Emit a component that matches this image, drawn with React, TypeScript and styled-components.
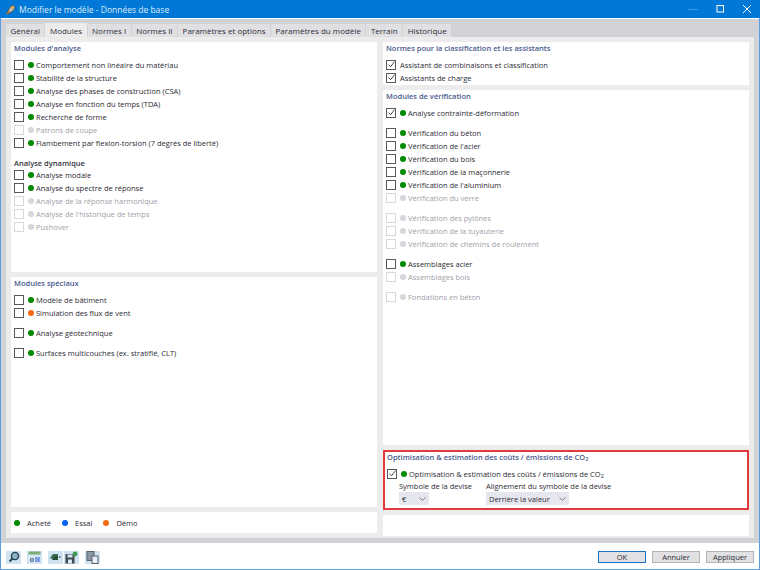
import styled, { createGlobalStyle } from "styled-components";

const GlobalStyle = createGlobalStyle`
    html, body {
        margin: 0;
        padding: 0;
        width: 760px;
        height: 570px;
        overflow: hidden;
        background: #fff;
        font-family: "Open Sans", "Noto Sans", sans-serif;
        font-size: 8px;
        color: #2b2b33;
    }
`;

type Item = { label: React.ReactNode; dot?: "green" | "orange" | "blue" | "off"; checked?: boolean; gap?: number };

const dotColors = { green: "#008a00", orange: "#f26a12", blue: "#0a62f0", off: "#d6d6dc" };

const CO2 = () => <>CO<Sub>2</Sub></>;

const analysis: Item[] = [
    { label: "Comportement non linéaire du matériau", dot: "green" },
    { label: "Stabilité de la structure", dot: "green" },
    { label: "Analyse des phases de construction (CSA)", dot: "green" },
    { label: "Analyse en fonction du temps (TDA)", dot: "green" },
    { label: "Recherche de forme", dot: "green" },
    { label: "Patrons de coupe", dot: "off" },
    { label: "Flambement par flexion-torsion (7 degrés de liberté)", dot: "green" },
];

const dynamic: Item[] = [
    { label: "Analyse modale", dot: "green" },
    { label: "Analyse du spectre de réponse", dot: "green" },
    { label: "Analyse de la réponse harmonique", dot: "off" },
    { label: "Analyse de l'historique de temps", dot: "off" },
    { label: "Pushover", dot: "off" },
];

const special: Item[] = [
    { label: "Modèle de bâtiment", dot: "green" },
    { label: "Simulation des flux de vent", dot: "orange" },
    { label: "Analyse géotechnique", dot: "green", gap: 7 },
    { label: "Surfaces multicouches (ex. stratifié, CLT)", dot: "green", gap: 7 },
];

const assistants: Item[] = [
    { label: "Assistant de combinaisons et classification", checked: true },
    { label: "Assistants de charge", checked: true },
];

const checks: Item[] = [
    { label: "Analyse contrainte-déformation", dot: "green", checked: true },
    { label: "Vérification du béton", dot: "green", gap: 7 },
    { label: "Vérification de l'acier", dot: "green" },
    { label: "Vérification du bois", dot: "green" },
    { label: "Vérification de la maçonnerie", dot: "green" },
    { label: "Vérification de l'aluminium", dot: "green" },
    { label: "Vérification du verre", dot: "off" },
    { label: "Vérification des pylônes", dot: "off", gap: 7 },
    { label: "Vérification de la tuyauterie", dot: "off" },
    { label: "Vérification de chemins de roulement", dot: "off" },
    { label: "Assemblages acier", dot: "green", gap: 7 },
    { label: "Assemblages bois", dot: "off" },
    { label: "Fondations en béton", dot: "off", gap: 7 },
];

const tabs = ["Général", "Modules", "Normes I", "Normes II", "Paramètres et options", "Paramètres du modèle", "Terrain", "Historique"];

const CheckList = ({ items }: { items: Item[] }) => (
    <List>
        {items.map((item, i) => (
            <Row key={i} $gap={item.gap ?? 0} $off={item.dot === "off"}>
                <Box $off={item.dot === "off"}>
                    {item.checked && (
                        <svg width="9" height="9" viewBox="0 0 9 9">
                            <path d="M1.5 4.5 L3.5 6.8 L7.6 1.6" fill="none" stroke="#333" strokeWidth="0.9" />
                        </svg>
                    )}
                </Box>
                {item.dot && <Dot $color={dotColors[item.dot]} />}
                <span>{item.label}</span>
            </Row>
        ))}
    </List>
);

const Chevron = () => (
    <svg width="7" height="4" viewBox="0 0 7 4">
        <path d="M0.5 0.5 L3.5 3.3 L6.5 0.5" fill="none" stroke="#555" strokeWidth="0.7" />
    </svg>
);

const App = () => {
    return (
        <Window>
            <GlobalStyle />
            <TitleBar>
                <svg width="10" height="11" viewBox="0 0 10 11">
                    <path d="M1 9 L4 3 L7 1 L9 3 L8 6 L4 9 Z" fill="#b9bcc0" stroke="#4a4030" strokeWidth="0.7" />
                    <circle cx="6.4" cy="3.6" r="1.2" fill="#d9a520" />
                    <path d="M1 10 L4 7" stroke="#c8781e" strokeWidth="1.2" />
                </svg>
                <Title>Modifier le modèle - Données de base</Title>
                <WindowButtons>
                    <svg width="10" height="10" viewBox="0 0 10 10">
                        <path d="M0 5.5 H10" stroke="#3f97e4" strokeWidth="1" />
                    </svg>
                    <svg width="10" height="10" viewBox="0 0 10 10">
                        <rect x="2" y="1.5" width="6.5" height="6.5" fill="none" stroke="#fff" strokeWidth="1" />
                    </svg>
                    <svg width="10" height="10" viewBox="0 0 10 10">
                        <path d="M1 1 L9 9 M9 1 L1 9" stroke="#fff" strokeWidth="1" />
                    </svg>
                </WindowButtons>
            </TitleBar>
            <Client>
                <TabStrip>
                    {tabs.map((tab) => (
                        <Tab key={tab} $active={tab === "Modules"}>{tab}</Tab>
                    ))}
                </TabStrip>
                <TabBody>
                    <Column>
                        <Panel $height={230}>
                            <PanelTitle>Modules d'analyse</PanelTitle>
                            <CheckList items={analysis} />
                            <SubTitle>Analyse dynamique</SubTitle>
                            <CheckList items={dynamic} />
                        </Panel>
                        <Panel $height={230}>
                            <PanelTitle>Modules spéciaux</PanelTitle>
                            <CheckList items={special} />
                        </Panel>
                        <Legend>
                            <LegendItem><Dot $color={dotColors.green} />Acheté</LegendItem>
                            <LegendItem><Dot $color={dotColors.blue} />Essai</LegendItem>
                            <LegendItem><Dot $color={dotColors.orange} />Démo</LegendItem>
                        </Legend>
                    </Column>
                    <Column>
                        <Panel $height={43}>
                            <PanelTitle>Normes pour la classification et les assistants</PanelTitle>
                            <CheckList items={assistants} />
                        </Panel>
                        <Panel $height={355}>
                            <PanelTitle>Modules de vérification</PanelTitle>
                            <CheckList items={checks} />
                        </Panel>
                        <Highlight>
                            <PanelTitle>Optimisation & estimation des coûts / émissions de <CO2 /></PanelTitle>
                            <CheckList items={[{ label: <>Optimisation & estimation des coûts / émissions de <CO2 /></>, dot: "green", checked: true }]} />
                            <Fields>
                                <Field>
                                    Symbole de la devise
                                    <Select $width={30}>€<Chevron /></Select>
                                </Field>
                                <Field>
                                    Alignement du symbole de la devise
                                    <Select $width={83}>Derrière la valeur<Chevron /></Select>
                                </Field>
                            </Fields>
                        </Highlight>
                        <Legend />
                    </Column>
                </TabBody>
                <Footer>
                    <Tools>
                        <Tool>
                            <svg width="12" height="12" viewBox="0 0 12 12">
                                <circle cx="7" cy="5" r="3.6" fill="#8fb4c8" stroke="#24404f" strokeWidth="1.4" />
                                <path d="M4.5 7.5 L1.5 10.5" stroke="#24404f" strokeWidth="1.8" />
                            </svg>
                        </Tool>
                        <Tool>
                            <svg width="13" height="13" viewBox="0 0 13 13">
                                <rect x="0.5" y="0.5" width="12" height="3" fill="#7fae7a" />
                                <rect x="0.5" y="4" width="12" height="8.5" fill="#d8e6f4" />
                                <circle cx="4" cy="9" r="1.6" fill="none" stroke="#3a5a80" />
                                <rect x="7" y="6" width="5" height="5" fill="#7f9fe0" />
                            </svg>
                        </Tool>
                        <ToolGroup>
                            <Tool>
                                <svg width="13" height="10" viewBox="0 0 13 10">
                                    <path d="M1 6 L4 2 H9 V7 H3 Z" fill="#3f6f52" />
                                    <path d="M3 8 L6 4 H9 V8 Z" fill="#24503a" />
                                    <path d="M10 4 L12.5 5 L10 6 Z" fill="#55606a" />
                                </svg>
                            </Tool>
                            <Tool>
                                <svg width="13" height="13" viewBox="0 0 13 13">
                                    <path d="M0.5 3 H9.5 V12.5 H0.5 Z" fill="#3e4a52" />
                                    <rect x="2.5" y="3.5" width="5" height="3" fill="#d8e6f4" />
                                    <rect x="3" y="8.5" width="4" height="4" fill="#d8e6f4" />
                                    <circle cx="10" cy="3" r="2.4" fill="#3c9a4c" />
                                </svg>
                            </Tool>
                        </ToolGroup>
                        <Tool>
                            <svg width="13" height="13" viewBox="0 0 13 13">
                                <rect x="1" y="0.5" width="7" height="9" fill="#8a97a3" stroke="#56626c" />
                                <rect x="6" y="5" width="6" height="7.5" fill="#e8eef4" stroke="#56626c" />
                            </svg>
                        </Tool>
                    </Tools>
                    <Buttons>
                        <Button $primary>OK</Button>
                        <Button>Annuler</Button>
                        <Button>Appliquer</Button>
                    </Buttons>
                </Footer>
            </Client>
        </Window>
    );
};

const Window = styled.div`
    width: 760px;
    height: 570px;
    box-sizing: border-box;
    display: flex;
    flex-direction: column;
    border: 1px solid #5a9fe0;
    border-top: none;
    background: #fff;
`;

const TitleBar = styled.div`
    height: 18px;
    flex: none;
    margin: 0 -1px;
    padding: 0 5px 0 6px;
    display: flex;
    align-items: center;
    gap: 3px;
    background: #0078d7;
    color: #fff;
`;

const Title = styled.div`
    font-size: 8.5px;
    color: #dcebf8;
`;

const WindowButtons = styled.div`
    margin-left: auto;
    display: flex;
    gap: 17px;
    padding-right: 3px;
`;

const Client = styled.div`
    flex: 1;
    display: flex;
    flex-direction: column;
    min-height: 0;
`;

const TabStrip = styled.div`
    height: 18px;
    flex: none;
    margin-top: 1px;
    padding: 5px 0 0 5px;
    box-sizing: border-box;
    display: flex;
    gap: 1px;
    background: #d2d2d6;
`;

const Tab = styled.div<{ $active?: boolean }>`
    height: ${({ $active }) => ($active ? 14 : 13)}px;
    margin-top: ${({ $active }) => ($active ? -1 : 0)}px;
    padding: 0 4.5px;
    display: flex;
    align-items: center;
    font-size: 8px;
    font-weight: 400;
    color: #2e2e38;
    background: ${({ $active }) => ($active ? "#ececec" : "#e0e0e3")};
`;

const TabBody = styled.div`
    height: 506px;
    flex: none;
    box-sizing: border-box;
    padding: 5px 10px 5px 10px;
    display: grid;
    grid-template-columns: 366px 366px;
    column-gap: 6px;
    background: #ececec;
    border-bottom: 5px solid #d2d2d6;
    border-left: 5px solid #d2d2d6;
    border-right: 5px solid #d2d2d6;
    padding-left: 5px;
    padding-right: 5px;
`;

const Column = styled.div`
    display: flex;
    flex-direction: column;
    gap: 5px;
`;

const Panel = styled.section<{ $height: number }>`
    height: ${({ $height }) => $height}px;
    flex: none;
    box-sizing: border-box;
    padding: 1px 3px;
    background: #fff;
`;

const Highlight = styled.section`
    height: 60px;
    flex: none;
    box-sizing: border-box;
    padding: 0 2px;
    background: #fff;
    border: 2px solid #e23b3b;
`;

const PanelTitle = styled.div`
    height: 10px;
    line-height: 10px;
    margin-bottom: 5px;
    font-size: 7.5px;
    font-weight: 600;
    color: #4a5a8c;
`;

const SubTitle = styled.div`
    height: 10px;
    line-height: 10px;
    margin-top: 9px;
    font-size: 7.5px;
    font-weight: 600;
    color: #33333b;
`;

const List = styled.div`
    display: flex;
    flex-direction: column;
`;

const Row = styled.div<{ $gap: number; $off: boolean }>`
    height: 13px;
    margin-top: ${({ $gap }) => $gap}px;
    display: flex;
    align-items: center;
    font-size: 7.5px;
    color: ${({ $off }) => ($off ? "#a0a0a8" : "#2b2b33")};
`;

const Box = styled.span<{ $off: boolean }>`
    width: 8px;
    height: 8px;
    flex: none;
    margin-right: 4px;
    display: inline-flex;
    align-items: center;
    justify-content: center;
    background: #fff;
    border: 1px solid ${({ $off }) => ($off ? "#d8d8dc" : "#58585e")};
    svg {
        flex: none;
    }
`;

const Dot = styled.span<{ $color: string }>`
    width: 6px;
    height: 6px;
    flex: none;
    margin-right: 2px;
    border-radius: 50%;
    background: ${({ $color }) => $color};
`;

const Sub = styled.sub`
    font-size: 5.5px;
    vertical-align: baseline;
    position: relative;
    top: 1px;
`;

const Fields = styled.div`
    display: flex;
    gap: 14px;
    padding-left: 12px;
    margin-top: 1px;
`;

const Field = styled.div`
    display: flex;
    flex-direction: column;
    align-items: flex-start;
    gap: 1px;
    font-size: 7.5px;
    line-height: 10px;
    color: #2b2b33;
`;

const Select = styled.div<{ $width: number }>`
    width: ${({ $width }) => $width}px;
    height: 13px;
    box-sizing: border-box;
    padding: 0 3px;
    display: flex;
    align-items: center;
    justify-content: space-between;
    background: #e6e6ee;
`;

const Legend = styled.div`
    height: 21px;
    flex: none;
    padding-left: 3px;
    display: flex;
    align-items: center;
    gap: 11px;
    background: #fff;
`;

const LegendItem = styled.div`
    display: flex;
    align-items: center;
    gap: 5px;
    font-size: 7.5px;
`;

const Footer = styled.div`
    flex: 1;
    padding: 2px 5px 0 5px;
    display: flex;
    align-items: center;
    justify-content: space-between;
`;

const Tools = styled.div`
    display: flex;
    gap: 6px;
`;

const ToolGroup = styled.div`
    display: flex;
    gap: 1px;
`;

const Tool = styled.div`
    width: 15px;
    height: 13px;
    display: flex;
    align-items: center;
    justify-content: center;
    background: #cfe3f3;
`;

const Buttons = styled.div`
    display: flex;
    gap: 6px;
`;

const Button = styled.div<{ $primary?: boolean }>`
    width: 48px;
    height: 12px;
    box-sizing: border-box;
    display: flex;
    align-items: center;
    justify-content: center;
    font-size: 7.5px;
    background: #e1e1e4;
    border: 1px solid ${({ $primary }) => ($primary ? "#1a72c4" : "#b4b4b8")};
`;

export default App;
